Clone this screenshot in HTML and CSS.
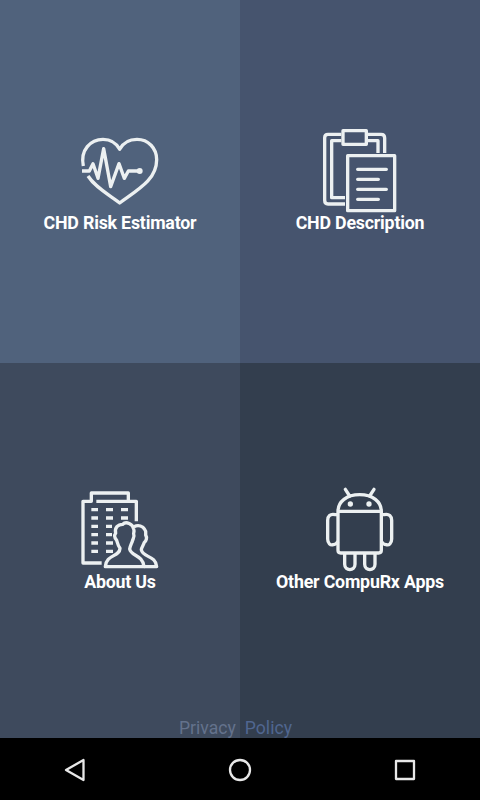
FILE: index.html
```html
<!DOCTYPE html>
<html lang="en">
<head>
<meta charset="utf-8">
<title>CHD Risk Estimator</title>
<link rel="stylesheet" href="styles.css">
</head>
<body>
<main class="tiles">
  <a class="tile tile-risk">
    <svg class="icon" width="100" height="88" viewBox="0 0 300 264">
      <path d="M40 123C30 75 62 43 99 43C121 43 139 54 149 73C159 54 179 43 201 43C235 43 260 70 260 104C260 163 207 192 149 234C112 206 76 187 54 153"/>
      <path d="M36 138H58L69 116L84 160L101 71L122 185L147 116L163 160L175 138H207"/>
      <circle class="solid" cx="209" cy="138" r="9"/>
    </svg>
    <span class="label">CHD Risk Estimator</span>
  </a>
  <a class="tile tile-description">
    <svg class="icon" width="100" height="93" viewBox="0 0 300 279">
      <path d="M94 43H54Q44 43 44 53V241Q44 252 54 252H105M105 233H65V62H94M174 43H213Q224 43 224 54V99M174 62H204V99"/>
      <path d="M99 32H169V73H99ZM113 107H254V272H113Z"/>
      <path class="round" d="M143 148H229M143 178H205M143 208H229M143 238H205"/>
    </svg>
    <span class="label">CHD Description</span>
  </a>
  <a class="tile tile-about">
    <svg class="icon" width="100" height="92" viewBox="0 0 300 276">
      <path d="M95 249H39V64H64V39H175V61M79 64H199V124"/>
      <path d="M64 89H84M108 89H129M153 89H174M64 114H84M108 114H129M153 114H174M64 139H84M108 139H126M64 164H84M108 164H126M64 189H84M108 189H129M64 214H84M108 214H129"/>
      <path d="M106 260C108 223 149 231 150 205C144 197 142 188 140 181C132 171 133 164 137 160C133 143 144 133 158 133C168 122 189 132 191 147C194 155 190 160 191 162C195 171 188 177 187 184C183 194 180 199 179 207C183 229 218 224 222 260Z"/>
      <path d="M192 140C206 133 219 139 224 148C229 153 227 161 227 165C232 173 229 183 223 187C220 197 215 201 214 209C218 233 258 226 260 260H222"/>
    </svg>
    <span class="label">About Us</span>
  </a>
  <a class="tile tile-apps">
    <svg class="icon" width="100" height="92" viewBox="0 0 300 276">
      <path d="M84 94C84 65 110 44 149 44C188 44 214 65 214 94V211Q214 219 206 219H92Q84 219 84 211ZM84 94H214"/>
      <path class="round" d="M106 28L119 48M192 28L179 48"/>
      <path d="M84 104H76C60 100 53 109 53 121V177C53 190 61 197 70 194C77 194 80 190 84 184M214 104H222C238 100 245 109 245 121V177C245 190 237 197 228 194C221 194 218 190 214 184M104 220V253C104 274 135 274 135 253V220M164 220V253C164 274 195 274 195 253V220"/>
      <circle class="solid" cx="121" cy="72" r="8"/>
      <circle class="solid" cx="177" cy="72" r="8"/>
    </svg>
    <span class="label">Other CompuRx Apps</span>
  </a>
  <div class="privacy"><span>Privacy</span><span class="policy">Policy</span></div>
</main>
<nav class="navbar">
  <svg width="30" height="30" viewBox="0 0 30 30"><path d="M6 15L23.5 5V25Z"/></svg>
  <svg width="30" height="30" viewBox="0 0 30 30"><circle cx="15" cy="15" r="10"/></svg>
  <svg width="30" height="30" viewBox="0 0 30 30"><path d="M6 6H24V24H6Z"/></svg>
</nav>
</body>
</html>
```
FILE: styles.css
```css
body {
  margin: 0;
  height: 800px;
  display: flex;
  flex-direction: column;
  background: #000;
  font-family: Roboto, sans-serif;
  font-size: 17.6px;
  line-height: 20px;
}

.tiles {
  position: relative;
  display: grid;
  grid-template-columns: 1fr 1fr;
  grid-template-rows: 363px 375px;
}

.tile {
  display: flex;
  flex-direction: column;
  align-items: center;
  box-sizing: border-box;
  color: #fff;
}

.tile-risk {
  padding-top: 125px;
  background: #50627c;
}

.tile-description {
  padding-top: 120px;
  background: #46546e;
}

.tile-about {
  padding-top: 117px;
  background: #3e4a5d;
}

.tile-apps {
  padding-top: 117px;
  background: #333e4e;
}

.icon {
  flex: none;
  fill: none;
  stroke: #ecf0f1;
  stroke-width: 10;
  stroke-linejoin: round;
}

.round {
  stroke-linecap: round;
}

.solid {
  fill: #ecf0f1;
  stroke: none;
}

.label {
  font-size: 17.8px;
  font-weight: 700;
  letter-spacing: -0.2px;
  white-space: nowrap;
}

.privacy {
  position: absolute;
  left: 179px;
  bottom: 0;
  display: flex;
  gap: 9px;
  color: #64728c;
}

.policy {
  color: #506690;
}

.navbar {
  flex: 1;
  display: flex;
  align-items: center;
  justify-content: space-between;
  padding: 2px 60px 0;
}

.navbar svg {
  fill: none;
  stroke: #e8e8e8;
  stroke-width: 2.3;
  stroke-linejoin: round;
}
```
